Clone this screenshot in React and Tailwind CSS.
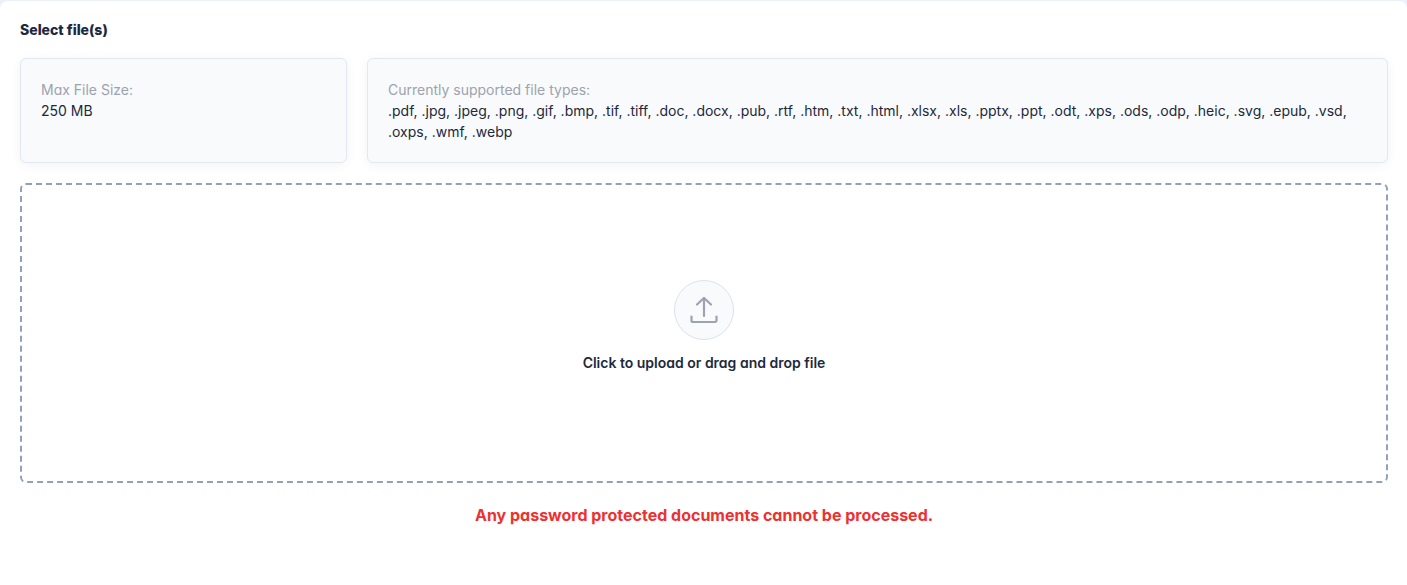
import React, { useRef, useState } from 'react';

const MAX_FILE_SIZE = '250 MB';

const fileTypes = [
  '.pdf', '.jpg', '.jpeg', '.png', '.gif', '.bmp', '.tif', '.tiff', '.doc', '.docx',
  '.pub', '.rtf', '.htm', '.txt', '.html', '.xlsx', '.xls', '.pptx', '.ppt', '.odt',
  '.xps', '.ods', '.odp', '.heic', '.svg', '.epub', '.vsd', '.oxps', '.wmf', '.webp',
];

const UploadIcon = () => (
  <svg
    className="size-7"
    viewBox="0 0 28 28"
    fill="none"
    stroke="currentColor"
    strokeWidth="2.2"
    strokeLinecap="round"
    strokeLinejoin="round"
    aria-hidden="true"
  >
    <path d="M14 20V2" />
    <path d="M7 8.5L14 2l7 6.5" />
    <path d="M1.5 20.5v4a1.5 1.5 0 0 0 1.5 1.5h22a1.5 1.5 0 0 0 1.5-1.5v-4" />
  </svg>
);

const InfoCard = ({ label, className = '', children }) => (
  <div
    className={`${className} rounded-md border border-slate-200 bg-[#f9fafc] p-5 shadow-[0_2px_12px_rgba(0,0,0,0.05)]`}
  >
    <p className="text-[#9ca3af]">{label}</p>
    <p>{children}</p>
  </div>
);

const App = () => {
  const inputRef = useRef(null);
  const [files, setFiles] = useState([]);

  const handleDrop = (e) => {
    e.preventDefault();
    setFiles([...e.dataTransfer.files]);
  };

  return (
    <div className="min-h-screen flex flex-col bg-[#eef0f7] pt-px font-['Inter',sans-serif] [font-feature-settings:'cv11'] text-sm leading-[21px] text-slate-800">
      <main className="grow rounded-t-lg bg-white pl-5 pr-[19px] pt-[18px] pb-5">
        <h1 className="font-extrabold">Select file(s)</h1>

        <div className="mt-[18px] grid grid-cols-4 gap-5">
          <InfoCard label="Max File Size:">{MAX_FILE_SIZE}</InfoCard>
          <InfoCard label="Currently supported file types:" className="col-span-3">
            {fileTypes.join(', ')}
          </InfoCard>
        </div>

        <button
          type="button"
          onClick={() => inputRef.current.click()}
          onDragOver={(e) => e.preventDefault()}
          onDrop={handleDrop}
          className="mt-5 flex h-[300px] w-full cursor-pointer flex-col items-center justify-center rounded-md border-2 border-dashed border-slate-400"
        >
          <span className="flex size-[60px] items-center justify-center rounded-full border border-[#dbe2ec] bg-[#f9fafc] text-[#9ca3af]">
            <UploadIcon />
          </span>
          <span className="mt-3 mb-[14px] font-semibold">
            {files.length > 0
              ? files.map((file) => file.name).join(', ')
              : 'Click to upload or drag and drop file'}
          </span>
        </button>
        <input
          ref={inputRef}
          type="file"
          multiple
          accept={fileTypes.join(',')}
          aria-label="Select file(s)"
          onChange={(e) => setFiles([...e.target.files])}
          className="hidden"
        />

        <p className="mt-5 text-center text-base font-bold text-[#f03030]">
          Any password protected documents cannot be processed.
        </p>
      </main>
    </div>
  );
};

export default App;
